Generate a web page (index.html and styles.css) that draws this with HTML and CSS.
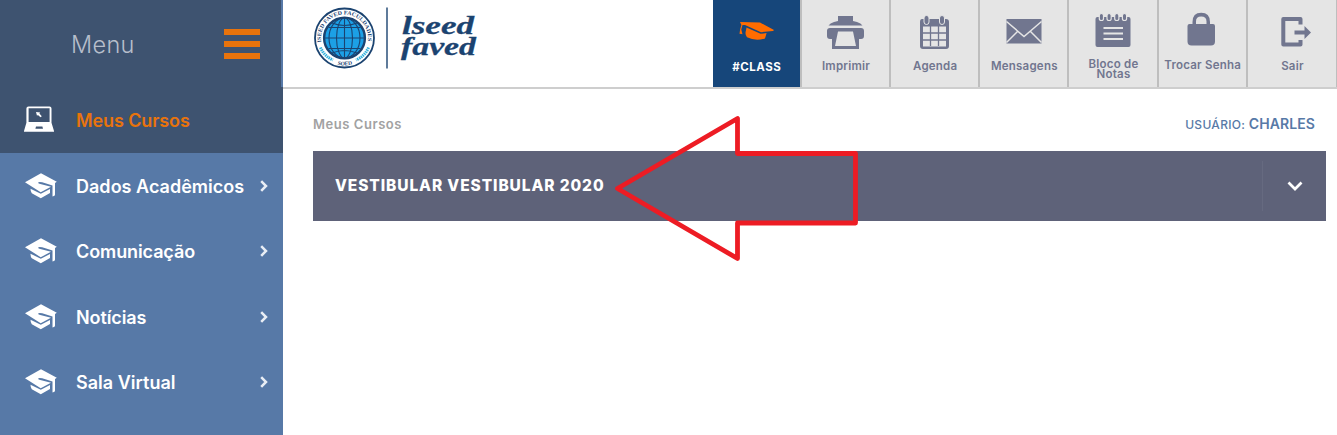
FILE: index.html
```html
<!DOCTYPE html>
<html lang="pt-BR">
<head>
<meta charset="utf-8">
<title>Meus Cursos</title>
<link rel="stylesheet" href="styles.css">
</head>
<body>
<svg class="defs" width="0" height="0">
  <symbol id="cap" viewBox="0 0 32 26">
    <path d="M16 .3 31.8 8.800 30 10v11.500q0 1.200-1.100 1.600l-1.400.4V12.600L17.200 9.300q-3.500-.9-4.100.2 0 1 2.200 1.600l10.700 2.700-10.300 5.400L0 9.300Z"/>
    <path d="M5.500 15.700 15.800 20.800 25 16v3.900l-9.200 5.400-9-5Q5.500 18.800 5.500 15.700Z"/>
  </symbol>
  <symbol id="chev" viewBox="0 0 8 12"><path d="M1.200 1.200 6 6l-4.800 4.800" fill="none" stroke="currentColor" stroke-width="2.500"/></symbol>
</svg>
<div class="app">
  <aside class="sidebar">
    <div class="menu-head">
      <span class="menu-title">Menu</span>
      <div class="burger"><i></i><i></i><i></i></div>
    </div>
    <nav>
      <a class="item active">
        <svg class="laptop" viewBox="0 0 30 26"><path fill-rule="evenodd" d="M4.500.4h21q2 0 2 2v14.400L30 25v.8H0V25l2.400-8.200V2.400q0-2 2.100-2ZM4.600 2.300v13.600h21V2.300ZM12 20.400l-.6 2.400h7.600l-.6-2.400Z"/><path d="m12 6 4.200.6-.8 1 2.400 2.600-1.300 1.100-2.600-2.400-.9.900Z"/></svg>
        <span>Meus Cursos</span>
      </a>
      <a class="item"><svg class="cap"><use href="#cap"/></svg><span class="wide">Dados Acadêmicos</span><svg class="chev"><use href="#chev"/></svg></a>
      <a class="item"><svg class="cap"><use href="#cap"/></svg><span>Comunicação</span><svg class="chev"><use href="#chev"/></svg></a>
      <a class="item"><svg class="cap"><use href="#cap"/></svg><span>Notícias</span><svg class="chev"><use href="#chev"/></svg></a>
      <a class="item"><svg class="cap"><use href="#cap"/></svg><span class="wide">Sala Virtual</span><svg class="chev"><use href="#chev"/></svg></a>
    </nav>
  </aside>
  <main>
    <header>
      <svg class="logo" viewBox="0 0 180 80">
        <circle cx="34.500" cy="38" r="29.500" fill="#fff" stroke="#1b4370" stroke-width="1.800"/>
        <circle cx="34.500" cy="38" r="20.400" fill="#1ca0e6" stroke="#1b4370" stroke-width="2.400"/>
        <g fill="none" stroke="#1b4370" stroke-width="1.100"><path d="M34.500 18v40M14.500 38h40M18.500 27.500h32M18.500 48.500h32M22 23q12.500 5 25 0M22 53q12.500-5 25 0"/><ellipse cx="34.500" cy="38" rx="8" ry="20"/><ellipse cx="34.500" cy="38" rx="15.500" ry="20"/></g>
        <path id="arcTop" fill="none" d="M11.600 43.200A23.500 23.500 0 1 1 57.400 43.200"/>
        <path id="arcBottom" fill="none" d="M22 62.500A27.500 27.500 0 0 0 47 62.500"/>
        <g class="seal"><text><textPath href="#arcTop" startOffset="1" textLength="81" lengthAdjust="spacingAndGlyphs">ISEED FAVED FACULDADES</textPath></text><text><textPath href="#arcBottom" startOffset="6" textLength="15">SOED</textPath></text></g>
        <g fill="none" stroke="#35b2dd" stroke-width="3" stroke-dasharray="1.500 .7"><path d="M10.500 47.500Q14 56 23 60M58.500 47.500Q55 56 46 60"/></g>
        <path d="M77 7.500v61" stroke="#1b4370" stroke-width="1.400"/>
        <g class="brand"><text x="92" y="34" textLength="72" lengthAdjust="spacingAndGlyphs">lseed</text><text x="91" y="55" textLength="75" lengthAdjust="spacingAndGlyphs">faved</text></g>
      </svg>
      <div class="tools">
        <a class="tool class"><svg viewBox="0 0 88 52"><path d="m28 22 20 .5 14 7.600-1 .8-12 1.300-16-7.200-2.500.1-1.200 4.300 1.200 4.900-3-.6.6-4.300 1.300-4.500Z"/><path d="m34.500 27.400 14.100 6.400 6-.7-1.600 5.300q-9.500 3-18-1.200-2.400-2.500-1-7Z"/></svg><span>#CLASS</span></a>
        <a class="tool"><svg viewBox="0 0 88 52"><path d="M37 16h15v5l4 1q4 1 5.500 3.500h-34q1.500-2.500 5.500-3.500l4-1Z"/><path fill-rule="evenodd" d="M29 28h31q3 0 3 3v5q0 3-3 3h-2v10H31V39h-2q-3 0-3-3v-5q0-3 3-3Zm8 3.500-3 14.500h21L52 31.500Z"/></svg><span>Imprimir</span></a>
        <a class="tool"><svg viewBox="0 0 88 52"><path fill-rule="evenodd" d="M31 19h24q3 0 3 3v24q0 3-3 3H32q-3 0-3-3V22q0-3 2-3Zm1 7.500v20h23v-20Z"/><path d="M39.500 26v20M47.500 26v20M32 33h23M32 40h23" fill="none" stroke="#71768f" stroke-width="1.300"/><rect x="33" y="15.500" width="5" height="9" rx="2.500" stroke="#e5e5e5"/><rect x="48.500" y="15.500" width="5" height="9" rx="2.500" stroke="#e5e5e5"/></svg><span>Agenda</span></a>
        <a class="tool"><svg viewBox="0 0 88 52"><path d="M26.500 19h35v24.500h-35Z"/><path d="m26.500 21.500 17.500 15 17.500-15M26.500 42.500l11-11M61.500 42.500l-11-11" fill="none" stroke="#e5e5e5" stroke-width="1.500"/></svg><span>Mensagens</span></a>
        <a class="tool two"><svg viewBox="0 0 88 52"><rect x="26.500" y="17" width="35" height="30" rx="2"/><g stroke="#e5e5e5" stroke-width="1.200"><rect x="30.300" y="13.500" width="4.200" height="7" rx="2.100"/><rect x="38" y="13.500" width="4.200" height="7" rx="2.100"/><rect x="45.700" y="13.500" width="4.200" height="7" rx="2.100"/><rect x="53.400" y="13.500" width="4.200" height="7" rx="2.100"/></g><path d="M34.500 28h19.500M34.500 33.500h19.500M34.500 39h19.500" stroke="#e5e5e5" stroke-width="2"/></svg><span>Bloco de<br>Notas</span></a>
        <a class="tool lock"><svg viewBox="0 0 88 52"><path fill-rule="evenodd" d="M31.500 24h3v-2q0-9.200 8.700-9.200T52 22v2h3q2 0 2 2v15.500q0 4-4 4H33.500q-4 0-4-4V26q0-2 2-2Zm6.500 0h10.500v-2.500q0-5-5.300-5T38 21.500Z"/></svg><span>Trocar Senha</span></a>
        <a class="tool"><svg viewBox="0 0 88 52"><path d="M52.500 24.500V19H35.300v25.500H52.500V40" fill="none" stroke="#71768f" stroke-width="4" stroke-linejoin="round"/><path d="M46.500 30.500h10V26l6.500 6.500L56.500 39v-4.500h-10Z"/></svg><span>Sair</span></a>
      </div>
    </header>
    <section class="content">
      <div class="crumbs"><span class="crumb">Meus Cursos</span><span class="user">USUÁRIO: <b>CHARLES</b></span></div>
      <div class="course"><h1>VESTIBULAR VESTIBULAR 2020</h1><div class="toggle"><svg viewBox="0 0 16 11"><path d="m1.500 1.500 6.500 6.500 6.500-6.500" fill="none" stroke="#fff" stroke-width="2.700"/></svg></div></div>
    </section>
  </main>
  <svg class="arrow" viewBox="0 0 246 150"><path d="M5.500 75.500 125.500 5.500V40.500H243.500V110H125.500V145.500Z" fill="none" stroke="#ed1c24" stroke-width="4.800" stroke-linejoin="round"/></svg>
</div>
</body>
</html>
```

FILE: styles.css
```css
* { box-sizing: border-box; }
body { margin: 0; background: #fff; font-family: Inter, "Liberation Sans", sans-serif; overflow: hidden; }
svg { display: block; flex: none; }
.defs { position: absolute; }
.app { position: relative; display: flex; width: 1337px; height: 435px; }

.sidebar { width: 283px; flex: none; background: #5779a7; color: #fff; }
.menu-head { display: flex; justify-content: space-between; align-items: center; width: 281px; height: 87px; padding: 0 21px 0 71px; background: #3e5370; }
.menu-title { padding-top: 2px; color: #b6becb; font-size: 23.5px; font-weight: 300; letter-spacing: .3px; line-height: 30px; }
.burger { display: grid; gap: 6px; width: 36px; }
.burger i { height: 6px; background: #e8730c; }
.item { display: flex; align-items: center; height: 65.5px; padding: 0 15px 0 25px; font-size: 18px; font-weight: 600; }
.item span { flex: 1; margin-left: 19px; padding-top: 2px; line-height: 24px; letter-spacing: -.1px; white-space: nowrap; }
.item .wide { letter-spacing: .02px; }
.item.active { height: 66px; padding-left: 24px; background: #3e5370; color: #e8730c; }
.item.active span { margin-left: 22px; }
.laptop { width: 30px; height: 26px; fill: #fff; margin-bottom: 2px; }
.cap { width: 32px; height: 26px; fill: #fff; }
.chev { width: 8px; height: 12px; color: #e9eef5; }

main { flex: 1; }
header { display: flex; justify-content: space-between; height: 89px; border-bottom: 2px solid #cecece; }
.logo { width: 180px; height: 80px; margin-left: 27px; }
.seal { font: bold 5.6px "Liberation Serif", serif; fill: #1b4370; }
.brand { font: italic bold 25px "Liberation Serif", serif; fill: #1b4370; stroke: #1b4370; stroke-width: .3px; }
.tools { display: flex; }
.tool { display: flex; flex-direction: column; align-items: center; width: 89.2px; height: 87px; background: #e5e5e5; border-right: 2px solid #bebebe; color: #71768f; font-size: 11.5px; font-weight: 600; line-height: 10px; letter-spacing: .22px; text-align: center; }
.tool:last-child { border-right-width: 1px; }
.tool svg { width: 88px; height: 52px; fill: #71768f; }
.tool span { margin-top: 9px; padding-left: 1px; white-space: nowrap; }
.tool.class { background: #16467a; color: #fff; font-weight: 700; border-right-color: #bebebe; letter-spacing: .5px; }
.tool.class svg { fill: #ff6c00; }
.tool.class span { margin-top: 10px; }
.tool.two span { margin-top: 6.5px; }
.tool.lock span { margin-top: 8px; }

.content { padding: 27px 11px 0 30px; }
.crumbs { display: flex; justify-content: space-between; height: 35px; padding-right: 11px; line-height: 16px; font-size: 13px; }
.crumb { color: #a2a2a2; font-weight: 600; letter-spacing: .55px; }
.user { color: #5779a7; font-size: 12px; font-weight: 500; letter-spacing: .3px; }
.user b { font-size: 14px; font-weight: 600; letter-spacing: .1px; }
.course { display: flex; justify-content: space-between; align-items: center; height: 70px; padding-left: 22px; background: #5e6279; color: #fff; }
h1 { margin: 0; font-size: 15.5px; font-weight: 800; line-height: 20px; letter-spacing: .9px; }
.toggle { display: flex; justify-content: center; align-items: center; width: 64px; height: 50px; border-left: 1px solid #666a80; }
.toggle svg { width: 16px; height: 11px; }
.arrow { position: absolute; left: 612px; top: 113px; width: 246px; height: 150px; }
```
